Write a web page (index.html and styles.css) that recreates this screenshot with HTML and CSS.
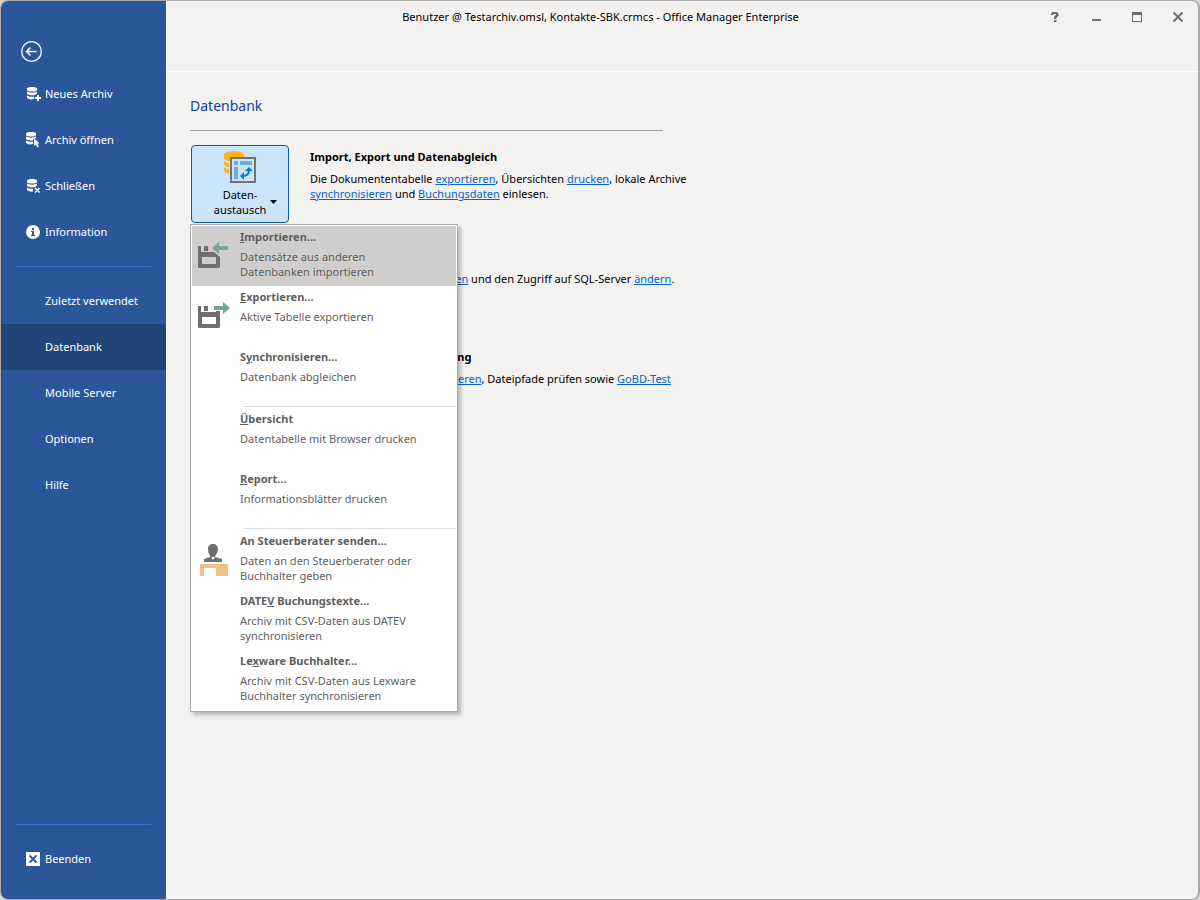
FILE: index.html
```html
<!DOCTYPE html>
<html lang="de">
<head>
    <meta charset="UTF-8">
    <meta name="viewport" content="width=device-width, initial-scale=1.0">
    <title>Office Manager Enterprise</title>
    <link rel="stylesheet" href="styles.css">
</head>
<body>
    <div class="window">
        <nav class="sidebar">
            <button class="back" aria-label="Zurück">
                <svg width="22" height="22" viewBox="0 0 22 22" fill="none" stroke="#fff">
                    <circle cx="11.5" cy="11.5" r="9.8" stroke-width="1.3"/>
                    <path d="M16.500 11.500H7M10.500 7.500L6.500 11.500L10.500 15.500" stroke-width="1.5"/>
                </svg>
            </button>
            <button class="nav-item">
                <svg class="nav-icon" viewBox="0 0 16 16">
                    <path d="M1 2.5C1 .5 11 .5 11 2.5V4C11 6 1 6 1 4Z"/>
                    <path d="M1 5.5C3 7 9 7 11 5.5V7.5L9 9C6 9.8 1 9 1 7.5Z"/>
                    <path d="M1 9.5C3 11 6 11 8 10.5V13C5 14 1 13 1 11.5Z"/>
                    <path d="M11 9H13V11H15V13H13V15H11V13H9V11H11Z"/>
                </svg>
                Neues Archiv
            </button>
            <button class="nav-item">
                <svg class="nav-icon" viewBox="0 0 16 16">
                    <path d="M0 1.5C0 -.5 10 -.5 10 1.5V3C10 5 0 5 0 3Z"/>
                    <path d="M0 4.5C2 6 8 6 10 4.5V6L7 7V8.5C4 8.5 0 8 0 6.5Z"/>
                    <path d="M0 8.5C2 10 5 10 7 9.5V12C4 13 0 12 0 10.5Z"/>
                    <path d="M8 6L13.5 11.5H11.5L13 14.5L11.5 15.5L10 12.5L8 14Z"/>
                </svg>
                Archiv öffnen
            </button>
            <button class="nav-item">
                <svg class="nav-icon" viewBox="0 0 16 16">
                    <path d="M1 2.5C1 .5 11 .5 11 2.5V4C11 6 1 6 1 4Z"/>
                    <path d="M1 5.5C3 7 9 7 11 5.5V7.5L9 9C6 9.8 1 9 1 7.5Z"/>
                    <path d="M1 9.5C3 11 6 11 7 10.5V13.5C5 14 1 13 1 11.5Z"/>
                    <path d="M9 10L13.5 14.5M13.5 10L9 14.5" stroke="#fff" stroke-width="1.5"/>
                </svg>
                Schließen
            </button>
            <button class="nav-item">
                <svg class="nav-icon" viewBox="0 0 16 16">
                    <circle cx="7" cy="8" r="7"/>
                    <path d="M6 4H8V6H6ZM5 7H8V11H9V12H5V11H6V8H5Z" fill="#2b579a"/>
                </svg>
                Information
            </button>
            <hr>
            <button class="nav-item">Zuletzt verwendet</button>
            <button class="nav-item active">Datenbank</button>
            <button class="nav-item">Mobile Server</button>
            <button class="nav-item">Optionen</button>
            <button class="nav-item">Hilfe</button>
            <hr class="bottom-line">
            <button class="nav-item">
                <svg class="nav-icon" viewBox="0 0 16 16">
                    <path d="M0 1H14V15H0Z"/>
                    <path d="M3.5 4.5L10.5 11.5M10.5 4.5L3.5 11.5" stroke="#2b579a" stroke-width="1.8"/>
                </svg>
                Beenden
            </button>
        </nav>

        <div class="content">
            <header class="titlebar">
                <div class="title">Benutzer @ Testarchiv.omsl, Kontakte-SBK.crmcs - Office Manager Enterprise</div>
                <button class="win-btn" aria-label="Hilfe">
                    <svg width="12" height="12" viewBox="0 0 12 12"><path d="M2 4V2.5L3.5 1H8L9.5 2.5V5L7.5 6.5V8H5V5.5L7 4V3H4.5V4ZM5 9H7.5V11H5Z"/></svg>
                </button>
                <button class="win-btn" aria-label="Minimieren">
                    <svg width="12" height="12" viewBox="0 0 12 12"><path d="M2 8H11V10H2Z"/></svg>
                </button>
                <button class="win-btn" aria-label="Maximieren">
                    <svg width="12" height="12" viewBox="0 0 12 12"><path fill-rule="evenodd" d="M1 1H11V11H1ZM2 4V10H10V4Z"/></svg>
                </button>
                <button class="win-btn" aria-label="Schließen">
                    <svg width="12" height="12" viewBox="0 0 12 12"><path d="M1.5 1.5L10.5 10.5M10.5 1.5L1.5 10.5" stroke="#6e6e6e" stroke-width="2"/></svg>
                </button>
            </header>

            <main class="page">
                <h1>Datenbank</h1>

                <section class="row">
                    <div class="dropdown">
                        <button class="big-btn" aria-haspopup="menu" aria-expanded="true">
                            <svg width="32" height="32" viewBox="0 0 32 32">
                                <g fill="#fdb515">
                                    <path d="M0 4C0 -1 20 -1 20 4V6H6V10C3 10 0 9 0 7Z"/>
                                    <path d="M0 10C2 12 4 12 5 12V16C3 16 0 15 0 13Z"/>
                                    <path d="M0 16C2 18 4 18 5 18V22C3 22 0 21 0 19Z"/>
                                </g>
                                <path d="M7 7H31V31H7Z" fill="#cce4f7" stroke="#737373" stroke-width="2"/>
                                <path d="M10 10H14V14H10ZM16 10H28V14H16ZM10 16H14V28H10Z" fill="#6cabe8"/>
                                <path d="M19 25C23 25 25 23 25 19" fill="none" stroke="#0f75d4" stroke-width="2"/>
                                <path d="M20 21V29L16 25ZM21 20H29L25 16Z" fill="#0f75d4"/>
                            </svg>
                            <span class="big-label">
                                <span class="big-text">Daten-<br>austausch</span>
                                <svg width="7" height="4" viewBox="0 0 7 4"><path d="M0 0H7L3.5 4Z"/></svg>
                            </span>
                        </button>

                        <div class="menu" role="menu">
                            <button class="menu-item hover" role="menuitem">
                                <svg class="menu-icon" viewBox="0 0 32 32">
                                    <path fill-rule="evenodd" d="M1 7H4V13H17L23 18V28L22 29H2L1 28ZM5 18V25H19V18ZM7 7H11V12H7Z" fill="#6f6f6f"/>
                                    <path d="M15 9L22 3V7H31V11H22V15Z" fill="#75a697"/>
                                </svg>
                                <span class="menu-text">
                                    <strong><u>I</u>mportieren...</strong>
                                    <span>Datensätze aus anderen<br>Datenbanken importieren</span>
                                </span>
                            </button>
                            <button class="menu-item" role="menuitem">
                                <svg class="menu-icon" viewBox="0 0 32 32">
                                    <path fill-rule="evenodd" d="M1 7H4V13H19V12H23V28L22 29H2L1 28ZM5 18V25H19V18ZM7 7H11V12H7Z" fill="#6f6f6f"/>
                                    <path d="M33 9L26 3V7H17V11H26V15Z" fill="#75a697"/>
                                </svg>
                                <span class="menu-text">
                                    <strong><u>E</u>xportieren...</strong>
                                    <span>Aktive Tabelle exportieren</span>
                                </span>
                            </button>
                            <button class="menu-item" role="menuitem">
                                <span class="menu-icon"></span>
                                <span class="menu-text">
                                    <strong>S<u>y</u>nchronisieren...</strong>
                                    <span>Datenbank abgleichen</span>
                                </span>
                            </button>
                            <hr>
                            <button class="menu-item" role="menuitem">
                                <span class="menu-icon"></span>
                                <span class="menu-text">
                                    <strong><u>Ü</u>bersicht</strong>
                                    <span>Datentabelle mit Browser drucken</span>
                                </span>
                            </button>
                            <button class="menu-item" role="menuitem">
                                <span class="menu-icon"></span>
                                <span class="menu-text">
                                    <strong><u>R</u>eport...</strong>
                                    <span>Informationsblätter drucken</span>
                                </span>
                            </button>
                            <hr>
                            <button class="menu-item" role="menuitem">
                                <svg class="menu-icon" viewBox="0 0 32 32">
                                    <path d="M16 1C19 1 21 3 21 6C21 9 19 12 18 13V14L25 16V19H7V16L13 14V13C12 11 11 9 11 6C11 3 13 1 16 1Z" fill="#6f6f6f"/>
                                    <path d="M14 14H18L16 17Z" fill="#fff"/>
                                    <path d="M3 21H31V33H19V25H7V33H3Z" fill="#e9c383"/>
                                </svg>
                                <span class="menu-text">
                                    <strong>An Steuerberater senden...</strong>
                                    <span>Daten an den Steuerberater oder<br>Buchhalter geben</span>
                                </span>
                            </button>
                            <button class="menu-item" role="menuitem">
                                <span class="menu-icon"></span>
                                <span class="menu-text">
                                    <strong>DATE<u>V</u> Buchungstexte...</strong>
                                    <span>Archiv mit CSV-Daten aus DATEV<br>synchronisieren</span>
                                </span>
                            </button>
                            <button class="menu-item" role="menuitem">
                                <span class="menu-icon"></span>
                                <span class="menu-text">
                                    <strong>Le<u>x</u>ware Buchhalter...</strong>
                                    <span>Archiv mit CSV-Daten aus Lexware<br>Buchhalter synchronisieren</span>
                                </span>
                            </button>
                        </div>
                    </div>
                    <div class="info">
                        <h2>Import, Export und Datenabgleich</h2>
                        <p>Die Dokumententabelle <a href="#">exportieren</a>, Übersichten <a href="#">drucken</a>, lokale Archive<br><a href="#">synchronisieren</a> und <a href="#">Buchungsdaten</a> einlesen.</p>
                    </div>
                </section>

                <section class="row">
                    <div class="info">
                        <h2>Einstellungen</h2>
                        <p>Die Archivdatenbank <a href="#">festlegen</a> und den Zugriff auf SQL-Server <a href="#">ändern</a>.</p>
                    </div>
                </section>

                <section class="row">
                    <div class="info">
                        <h2>Reparatur und Fehlerprüfung</h2>
                        <p>Archiv prüfen und <a href="#">reorganisieren</a>, Dateipfade prüfen sowie <a href="#">GoBD-Test</a></p>
                    </div>
                </section>
            </main>
        </div>
    </div>
</body>
</html>
```
FILE: styles.css
```css
:root {
    --blue: #2b579a;
    --blue-active: #224578;
    --blue-line: #3670c9;
    --bg: #f3f2f1;
    --border: #ababab;
    --link: #0563c9;
    --menu-text: #5f5f5f;
}

* {
    margin: 0;
    padding: 0;
    box-sizing: border-box;
}

body {
    background: #d8d8d8;
    color: #000;
    font: 11px/15px "Noto Sans", "Open Sans", sans-serif;
}

button {
    background: none;
    border: none;
    color: inherit;
    font: inherit;
    cursor: pointer;
}

.window {
    display: flex;
    min-height: 100vh;
    background: var(--bg);
    border: 1px solid var(--border);
    border-right-width: 2px;
    border-radius: 8px;
    overflow: hidden;
}

/* Seitenleiste */
.sidebar {
    display: flex;
    flex-direction: column;
    flex: none;
    width: 165px;
    padding: 39px 0 17px;
    background: var(--blue);
    color: #fff;
}

.back {
    width: 22px;
    height: 22px;
    margin: 0 0 9px 19px;
}

.back svg {
    display: block;
    overflow: visible;
}

.nav-item {
    display: flex;
    align-items: center;
    height: 46px;
    padding: 0 0 2px 44px;
    text-align: left;
}

.nav-item.active {
    background: var(--blue-active);
}

.nav-icon {
    width: 16px;
    height: 16px;
    margin: 2px 3px 0 -19px;
    fill: #fff;
}

.sidebar hr {
    border: none;
    border-top: 1px solid var(--blue-line);
    margin: 11px 15px;
}

.sidebar .bottom-line {
    margin-top: auto;
}

/* Inhalt */
.content {
    flex: 1;
    border-left: 1px solid #fff;
}

.titlebar {
    display: flex;
    height: 71px;
    border-bottom: 1px solid #fff;
}

.title {
    flex: 1;
    padding-top: 8px;
    text-align: center;
}

.win-btn {
    display: flex;
    align-items: center;
    justify-content: center;
    width: 41px;
    height: 32px;
}

.win-btn svg {
    fill: #6e6e6e;
}

.page {
    padding: 24px 23px;
}

h1 {
    max-width: 473px;
    margin-bottom: 14px;
    padding-bottom: 14px;
    border-bottom: 1px solid #a0a0a0;
    color: #123f9e;
    font-size: 14px;
    font-weight: normal;
    line-height: 20px;
}

.row {
    display: grid;
    grid-template-columns: 99px 1fr;
    column-gap: 21px;
    min-height: 78px;
    margin-bottom: 22px;
}

.info {
    grid-column: 2;
    padding-top: 4px;
}

.info h2 {
    margin-bottom: 7px;
    font-size: 11px;
    line-height: 15px;
}

.info a {
    color: var(--link);
}

.dropdown {
    position: relative;
    padding-left: 1px;
}

.big-btn {
    display: flex;
    flex-direction: column;
    align-items: center;
    width: 98px;
    height: 78px;
    padding-top: 5px;
    background: #cce4f7;
    border: 1px solid #0f5aa3;
    border-radius: 4px;
}

.big-label {
    display: grid;
    grid-template-columns: 1fr auto 1fr;
    align-items: center;
    column-gap: 4px;
    width: 100%;
    margin-top: 4px;
}

.big-text {
    grid-column: 2;
}

/* Aufklappmenü */
.menu {
    position: absolute;
    top: 79px;
    left: 0;
    z-index: 1;
    width: 268px;
    padding: 1px;
    background: #fff;
    border: 1px solid var(--border);
    box-shadow: 3px 3px 4px rgba(0, 0, 0, 0.25);
    color: var(--menu-text);
}

.menu-item {
    display: flex;
    gap: 11px;
    width: 100%;
    height: 60px;
    padding: 3px 5px;
    text-align: left;
}

.menu-item.hover {
    background: #d0cecd;
}

.menu-icon {
    flex: none;
    width: 32px;
    height: 32px;
    margin-top: 10px;
    overflow: visible;
}

.menu-text strong {
    display: block;
    margin-bottom: 5px;
}

.menu hr {
    height: 2px;
    margin-left: 51px;
    border: none;
    border-top: 1px solid #dcdfe2;
}
```
